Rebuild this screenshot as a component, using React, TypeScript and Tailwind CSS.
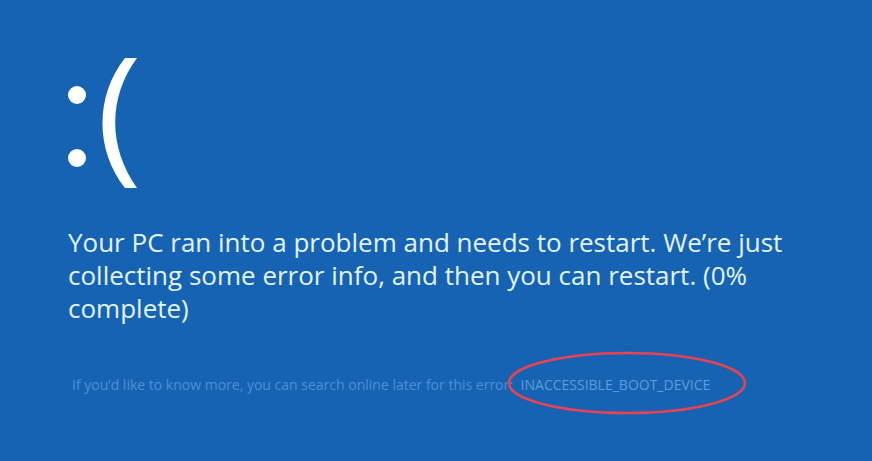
export default function App() {
  return (
    <main className="min-h-screen bg-[#1763b3] px-[68px] pt-14 font-['Open_Sans','Noto_Sans',sans-serif] text-white">
      <svg role="img" aria-label="Sad face" viewBox="0 0 70 134" className="h-[134px] w-[70px]" fill="currentColor">
        <circle cx="9" cy="39" r="9" />
        <circle cx="9" cy="102" r="9" />
        <path d="M57 2H69C40 41 40 91 69 132H57C27 94 27 40 57 2Z" />
      </svg>
      <h1 className="mt-9 max-w-[740px] text-[26px] leading-[33px] text-[#e2f4ff]">
        Your PC ran into a problem and needs to restart. We’re just collecting some error info, and then you can restart. (0% complete)
      </h1>
      <p className="mt-[50px] pl-1 text-sm whitespace-nowrap text-[#4c90d3]">
        If you’d like to know more, you can search online later for this error:{" "}
        <span className="relative ml-1 inline-block text-[#5c9ddc]">
          INACCESSIBLE_BOOT_DEVICE
          <svg aria-hidden="true" viewBox="0 0 240 64" className="absolute -top-6 -left-3.5 h-16 w-[240px]" fill="none">
            <ellipse cx="120" cy="32" rx="118" ry="30" stroke="#ea4250" strokeWidth="2.5" />
          </svg>
        </span>
      </p>
    </main>
  );
}
